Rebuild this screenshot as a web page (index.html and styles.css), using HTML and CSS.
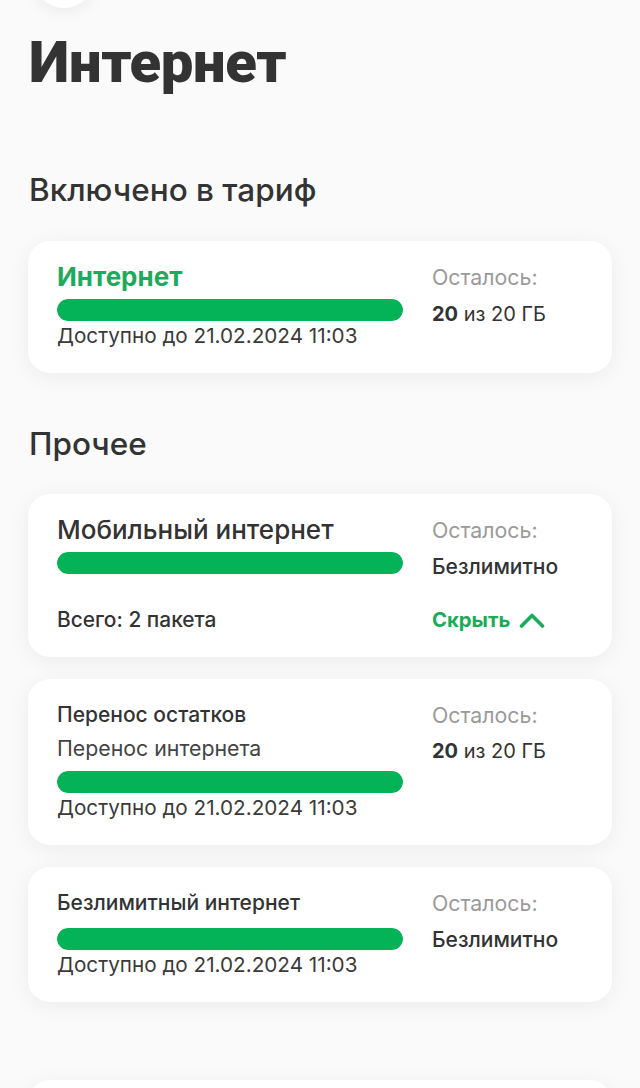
FILE: index.html
```html
<!DOCTYPE html>
<html lang="ru">
<head>
<meta charset="utf-8">
<title>Интернет</title>
<link rel="stylesheet" href="styles.css">
</head>
<body>
<div class="page">
  <div class="topbar"><div class="back-btn"></div></div>
  <h1 class="title">Интернет</h1>

  <h2 class="section-title">Включено в тариф</h2>
  <div class="card">
    <div class="row">
      <div class="main">
        <div class="name name-green">Интернет</div>
        <div class="bar"><div class="bar-fill" style="width:100%"></div></div>
        <div class="date">Доступно до 21.02.2024 11:03</div>
      </div>
      <div class="side">
        <div class="left-label">Осталось:</div>
        <div class="amount"><b>20</b> из 20 ГБ</div>
      </div>
    </div>
  </div>

  <h2 class="section-title section-gap">Прочее</h2>
  <div class="card">
    <div class="row">
      <div class="main">
        <div class="name">Мобильный интернет</div>
        <div class="bar"><div class="bar-fill" style="width:100%"></div></div>
      </div>
      <div class="side">
        <div class="left-label">Осталось:</div>
        <div class="amount amount-strong">Безлимитно</div>
      </div>
    </div>
    <div class="row footer">
      <div class="main total">Всего: 2 пакета</div>
      <div class="side">
        <span class="toggle">Скрыть
          <svg class="chev" width="26" height="16" viewBox="0 0 26 16" fill="none"><path d="M2.5 14L13 3.5L23.5 14" stroke="#1cab5a" stroke-width="3.6" stroke-linecap="round" stroke-linejoin="round"/></svg>
        </span>
      </div>
    </div>
  </div>

  <div class="card card-next">
    <div class="row">
      <div class="main">
        <div class="name name-small">Перенос остатков</div>
        <div class="sub">Перенос интернета</div>
        <div class="bar bar-after-sub"><div class="bar-fill" style="width:100%"></div></div>
        <div class="date">Доступно до 21.02.2024 11:03</div>
      </div>
      <div class="side">
        <div class="left-label">Осталось:</div>
        <div class="amount amount-tight"><b>20</b> из 20 ГБ</div>
      </div>
    </div>
  </div>

  <div class="card card-next">
    <div class="row">
      <div class="main">
        <div class="name name-small">Безлимитный интернет</div>
        <div class="bar bar-loose"><div class="bar-fill" style="width:100%"></div></div>
        <div class="date">Доступно до 21.02.2024 11:03</div>
      </div>
      <div class="side">
        <div class="left-label">Осталось:</div>
        <div class="amount amount-strong">Безлимитно</div>
      </div>
    </div>
  </div>

  <div class="card card-far"></div>
</div>
</body>
</html>
```

FILE: styles.css
```css
* { box-sizing: border-box; }
html, body {
  margin: 0;
  padding: 0;
  background: #fafafa;
}
body {
  font-family: Inter, Roboto, "Noto Sans", sans-serif;
  color: #333333;
  overflow: hidden;
}
.page {
  padding: 0 28px;
}
.topbar {
  height: 62px;
  margin-top: -54px;
  padding-left: 5px;
}
.back-btn {
  width: 62px;
  height: 62px;
  border-radius: 50%;
  background: #ffffff;
  box-shadow: 0 4px 16px rgba(0, 0, 0, 0.06);
}
.title {
  margin: 20px 0 0 1px;
  font-family: Roboto, "Noto Sans", sans-serif;
  font-size: 58px;
  line-height: 68px;
  font-weight: 900;
  letter-spacing: -0.3px;
  color: #333333;
}
.section-title {
  margin: 76px 0 33px 1px;
  font-size: 31.5px;
  line-height: 36px;
  font-weight: 500;
  color: #333333;
}
.section-gap {
  margin-top: 53px;
  margin-bottom: 32px;
}
.card {
  background: #ffffff;
  border-radius: 22px;
  padding: 21px 29px 22px;
  box-shadow: 0 4px 22px rgba(0, 0, 0, 0.06);
}
.card-next { margin-top: 22px; }
.card-far { margin-top: 78px; height: 120px; }
.row {
  display: flex;
  gap: 29px;
}
.main {
  width: 346px;
  flex: none;
  display: flex;
  flex-direction: column;
}
.side {
  flex: 1;
  display: flex;
  flex-direction: column;
}
.name {
  font-size: 26px;
  line-height: 30px;
  font-weight: 500;
}
.name-green {
  color: #1cab5a;
  font-weight: 700;
}
.name-small {
  font-size: 21px;
  font-weight: 500;
}
.sub {
  margin-top: 3px;
  font-size: 21.3px;
  line-height: 30px;
  color: #444444;
}
.bar {
  margin-top: 7px;
  height: 22px;
  border-radius: 11px;
  background: #e6e6e6;
  overflow: hidden;
}
.bar-after-sub { margin-top: 8px; }
.bar-loose { margin-top: 10px; }
.bar-fill {
  height: 100%;
  background: #04b357;
  border-radius: 11px;
}
.date {
  font-size: 20.7px;
  line-height: 30px;
  color: #3a3a3a;
}
.left-label {
  font-size: 21.3px;
  line-height: 30px;
  color: #9a9a9a;
}
.amount {
  margin-top: 7px;
  font-size: 20px;
  line-height: 30px;
  color: #333333;
}
.amount b { font-weight: 700; }
.amount-tight { margin-top: 6px; }
.amount-strong { font-size: 21px; font-weight: 500; }
.footer {
  margin-top: 23px;
}
.total {
  font-size: 20.9px;
  line-height: 30px;
  font-weight: 500;
}
.toggle {
  display: inline-flex;
  align-items: center;
  gap: 9px;
  font-size: 20.3px;
  line-height: 30px;
  font-weight: 700;
  color: #1cab5a;
}
.chev { display: block; }
```
